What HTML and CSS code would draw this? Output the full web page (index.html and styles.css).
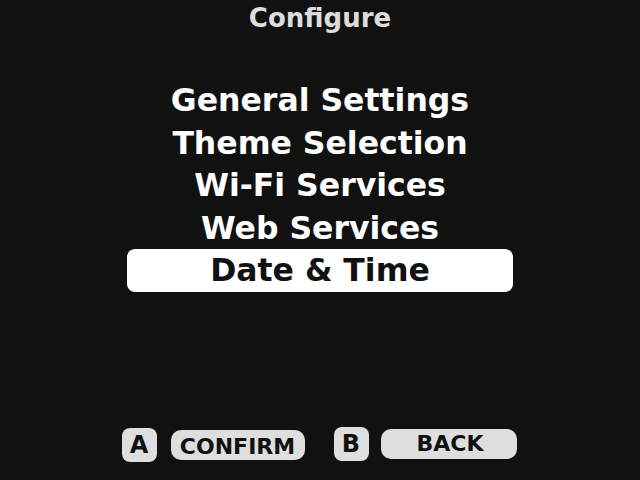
FILE: index.html
```html
<!DOCTYPE html>
<html>
<head>
<meta charset="utf-8">
<link rel="stylesheet" href="styles.css">
</head>
<body>
<div class="screen">
  <div class="title">Configure</div>
  <ul class="menu">
    <li class="item">General Settings</li>
    <li class="item">Theme Selection</li>
    <li class="item">Wi-Fi Services</li>
    <li class="item">Web Services</li>
    <li class="item selected">Date &amp; Time</li>
  </ul>
  <div class="footer">
    <div class="hint hint-a">
      <span class="key">A</span>
      <span class="label label-confirm">CONFIRM</span>
    </div>
    <div class="hint hint-b">
      <span class="key">B</span>
      <span class="label label-back">BACK</span>
    </div>
  </div>
</div>
</body>
</html>
```

FILE: styles.css
```css
html, body {
  margin: 0;
  padding: 0;
  background: #111111;
}
.screen {
  width: 640px;
  height: 480px;
  display: flex;
  flex-direction: column;
  align-items: center;
  font-family: "DejaVu Sans", "Noto Sans", sans-serif;
  font-weight: bold;
}
.title {
  margin-top: 2px;
  color: #dcdcdc;
  font-size: 26px;
  line-height: 32px;
}
.menu {
  list-style: none;
  margin: 45px 0 0 0;
  padding: 0;
  display: flex;
  flex-direction: column;
  align-items: center;
}
.item {
  width: 386px;
  height: 43px;
  line-height: 43px;
  text-align: center;
  color: #ffffff;
  font-size: 31.5px;
  border-radius: 8px;
  margin-bottom: -0.5px;
}
.item.selected {
  background: #ffffff;
  color: #111111;
}
.footer {
  margin-top: auto;
  margin-bottom: 18px;
  display: flex;
  align-items: flex-start;
  padding-right: 2px;
}
.hint {
  display: flex;
  align-items: center;
}
.hint-a {
  margin-top: 1px;
  gap: 14px;
}
.hint-b {
  margin-left: 29px;
  gap: 12px;
}
.key {
  width: 35px;
  height: 34px;
  line-height: 34px;
  text-align: center;
  background: #dedede;
  color: #111111;
  border-radius: 8px;
  font-size: 24px;
}
.label {
  height: 30px;
  line-height: 30px;
  text-align: center;
  background: #dedede;
  color: #111111;
  border-radius: 10px;
  font-size: 22px;
}
.hint-a .label { padding-top: 1px; height: 29px; line-height: 31px; }
.label-confirm { width: 134px; }
.label-back { width: 136px; padding-left: 3px; box-sizing: border-box; }
```
